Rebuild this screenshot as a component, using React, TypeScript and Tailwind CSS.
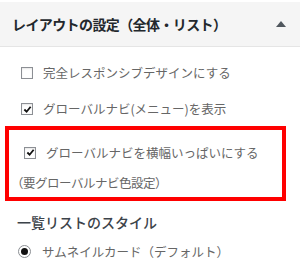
const font = { fontFamily: '"Noto Sans CJK JP", "Noto Sans", sans-serif' };

function Checkbox({ checked }: { checked: boolean }) {
  return (
    <span className="relative flex h-[12px] w-[12px] shrink-0 items-center justify-center border border-[#8c8f94] bg-white shadow-[inset_0_1px_2px_rgba(0,0,0,0.1)]">
      {checked && (
        <svg viewBox="0 0 10 10" className="h-[9px] w-[9px]">
          <path d="M1.5 5 L4 7.5 L8.5 2" fill="none" stroke="#111" strokeWidth="2" />
        </svg>
      )}
    </span>
  );
}

function Radio() {
  return (
    <span className="flex h-[13px] w-[13px] shrink-0 items-center justify-center rounded-full border border-[#8c8f94] bg-white">
      <span className="h-[7px] w-[7px] rounded-full bg-[#111]" />
    </span>
  );
}

export default function App() {
  return (
    <div className="h-[277px] w-[300px] overflow-hidden bg-white text-[#666]" style={font}>
      {/* header */}
      <div className="mt-[2px] flex h-[45px] items-center justify-between border-b border-[#e5e5e5] bg-[#f5f5f5] pl-[12px] pr-[14px]">
        <span className="text-[14px] font-bold tracking-[-0.6px] text-[#23282d]">
          レイアウトの設定（全体・リスト）
        </span>
        <svg viewBox="0 0 10 6" className="h-[6px] w-[10px]">
          <path d="M0 6 L5 0 L10 6 Z" fill="#50575e" />
        </svg>
      </div>

      <div className="flex flex-col">
        <label className="mt-[17px] flex items-center gap-[10px] pl-[21px] text-[12.5px]">
          <Checkbox checked={false} />
          <span>完全レスポンシブデザインにする</span>
        </label>
        <label className="mt-[17px] flex items-center gap-[10px] pl-[21px] text-[12.5px]">
          <Checkbox checked />
          <span>グローバルナビ(メニュー)を表示</span>
        </label>

        {/* highlighted item */}
        <div className="ml-[5px] mt-[7px] flex h-[75px] w-[281px] flex-col border-[4px] border-[#ff0000] pl-[11px]">
          <label className="mt-[14px] flex items-center gap-[10px] pl-[4px] text-[12.5px]">
            <Checkbox checked />
            <span>グローバルナビを横幅いっぱいにする</span>
          </label>
          <p className="ml-[-9px] mt-[12px] text-[12.5px] tracking-[-0.5px]">（要グローバルナビ色設定）</p>
        </div>

        <div className="mt-[11px] pl-[17px] text-[14px] font-medium text-[#3c434a]">
          一覧リストのスタイル
        </div>
        <label className="mt-[10px] flex items-center gap-[11px] pl-[18px] text-[12.5px]">
          <Radio />
          <span>サムネイルカード（デフォルト）</span>
        </label>
      </div>
    </div>
  );
}
